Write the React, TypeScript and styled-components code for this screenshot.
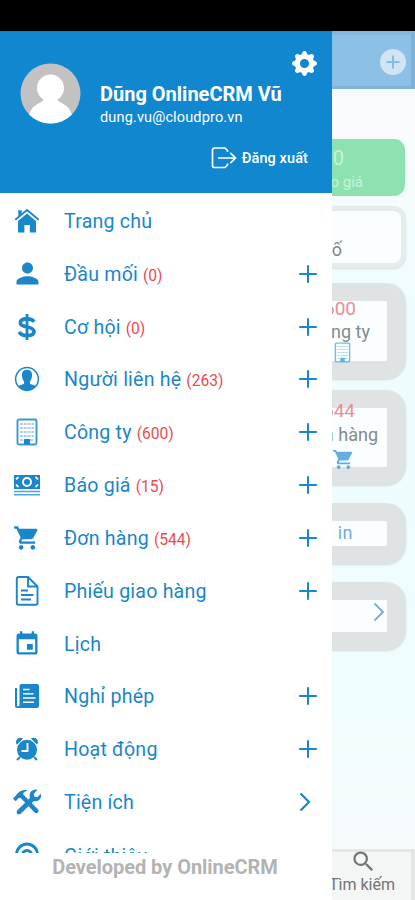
import React from 'react';
import styled, { createGlobalStyle } from 'styled-components';
import { MdPerson, MdShoppingCart, MdEvent, MdSearch } from 'react-icons/md';
import { BsGearFill } from 'react-icons/bs';

const BLUE = '#1b86c9';

const Global = createGlobalStyle`
  * { box-sizing: border-box; }
  body { margin: 0; background: #fff; font-family: Roboto, "Noto Sans", sans-serif; }
  svg { display: block; flex: none; }
`;

const Screen = styled.div`
  width: 415px;
  height: 900px;
  display: grid;
  grid-template-rows: 31px 869px;
  overflow: hidden;
`;
const StatusBar = styled.div`background: #000;`;
const Body = styled.div`
  display: grid;
  grid-template-columns: 332px 83px;
  min-height: 0;
`;

const Drawer = styled.aside`
  background: #fff;
  display: grid;
  grid-template-rows: 162px 660px 47px;
  min-height: 0;
`;
const Header = styled.header`
  background: #1187d0;
  border-top: 1px solid #2478ad;
  color: #fff;
  display: grid;
  grid-template-columns: 100px 1fr;
`;
const Avatar = styled.div`padding: 31px 0 0 20px;`;
const Account = styled.div`
  display: flex;
  flex-direction: column;
  align-items: flex-start;
`;
const Settings = styled.div`
  align-self: flex-end;
  padding-right: 15px;
  height: 45px;
  padding-top: 19px;
  font-size: 25px;
`;
const Name = styled.div`
  margin-top: 5px;
  font-size: 20px;
  line-height: 24px;
  font-weight: 700;
  white-space: nowrap;
`;
const Email = styled.div`
  font-size: 14.5px;
  line-height: 22px;
  letter-spacing: 0.15px;
  margin-top: 1px;
`;
const Logout = styled.div`
  align-self: flex-end;
  display: flex;
  align-items: center;
  gap: 5px;
  margin-top: 16px;
  padding-right: 24px;
  height: 26px;
  font-size: 14.5px;
  letter-spacing: 0.1px;
  font-weight: 500;
  white-space: nowrap;
`;

const Menu = styled.nav`
  padding-top: 1.4px;
  overflow: hidden;
  color: ${BLUE};
`;
const Row = styled.div`
  height: 52.85px;
  display: grid;
  grid-template-columns: 28px 1fr 30px;
  column-gap: 23px;
  padding: 0 9px 0 13px;
  align-items: center;

  &:last-child { padding-top: 3px; }
`;
const IconBox = styled.div<{ $shift?: number }>`
  display: flex;
  justify-content: center;
  align-items: center;
  padding-right: ${p => p.$shift ?? 0}px;
`;
const Label = styled.div`
  padding-top: 1px;
  font-size: 19.6px;
  letter-spacing: 0.2px;
  white-space: nowrap;
`;
const Count = styled.span`
  color: #ea4b50;
  font-size: 15.6px;
  letter-spacing: 0;
  margin-left: 5px;
`;
const Footer = styled.footer`
  display: flex;
  justify-content: center;
  padding: 2px 2px 0 0;
  font-size: 20px;
  line-height: 24px;
  font-weight: 700;
  letter-spacing: -0.05px;
  color: #b3b3b3;
  white-space: nowrap;
`;

const Page = styled.main`
  display: grid;
  grid-template-columns: minmax(0, 1fr);
  grid-template-rows: 58px 760px 51px;
  min-height: 0;
  min-width: 0;
  background: linear-gradient(180deg, #f8fbfe 10%, #effcfd 32%, #f0fdfd 78%, #f6fafd 94%);
  overflow: hidden;
`;
const TopBar = styled.div`
  background: #8cc0e5;
  border-top: 4px solid #83b9df;
  border-right: 4px solid #7fb1d7;
  border-bottom: 3px solid #80b3da;
  display: flex;
  justify-content: flex-end;
  align-items: center;
  padding: 2px 4px 0 0;
`;
const Cards = styled.div`
  display: flex;
  flex-direction: column;
  padding: 50px 9px 0 0;
  min-width: 0;
`;
const Quote = styled.div`
  height: 57px;
  margin-right: 1px;
  border-radius: 0 11px 11px 0;
  background: #8de2b2;
  color: #c8f2da;
  display: flex;
  flex-direction: column;
  overflow: hidden;
`;
const Card = styled.div<{ $h: number; $gap: number; $edge?: number }>`
  height: ${p => p.$h}px;
  margin-top: ${p => p.$gap}px;
  border: ${p => p.$edge ?? 18}px solid ${p => (p.$edge ? '#e6ebec' : '#dfe3e4')};
  border-right-width: ${p => (p.$edge ? 5 : 19)}px;
  border-left: 0;
  border-radius: 0 ${p => (p.$edge ? '13px 13px' : '20px 20px')} 0;
  background: #fafefe;
  box-shadow: 0 1px 2px #d4dadc;
  display: flex;
  flex-direction: column;
  clip-path: inset(-4px -4px -4px 0);
`;
const Line = styled.div<{ $right: number; $size: number; $color?: string; $h: number; $track?: number }>`
  display: flex;
  justify-content: flex-end;
  align-items: center;
  flex: none;
  height: ${p => p.$h}px;
  padding-right: ${p => p.$right}px;
  font-size: ${p => p.$size}px;
  letter-spacing: ${p => p.$track ?? 0}px;
  color: ${p => p.$color ?? 'inherit'};
  white-space: nowrap;
`;
const Thin = styled.div`color: #74abd7; display: flex; flex-direction: column;`;
const Tab = styled.div`
  background: #f4f5f5;
  border-top: 3px solid #e4e7e8;
  border-right: 4px solid #e3e5e6;
  color: #737474;
  display: flex;
  flex-direction: column;
`;

const Stroke = ({ size = 28, width = 2, children }: { size?: number; width?: number; children: React.ReactNode }) => (
  <svg width={size} height={size} viewBox="0 0 28 28" fill="none" stroke="currentColor" strokeWidth={width}>{children}</svg>
);
const Plus = () => <Stroke width={2}><path d="M14 5.200v17.600M5.200 14h17.600" /></Stroke>;
const Chevron = ({ width = 2.2 }: { width?: number }) => (
  <svg width="12" height="20" viewBox="0 0 12 20" fill="none" stroke="currentColor" strokeWidth={width}><path d="m1.500 1.500 8.500 8.500-8.500 8.500" /></svg>
);
const Home = () => (
  <svg width="28" height="28" viewBox="0 0 28 28" fill="currentColor">
    <path d="M5 14 14 6.500 23 14v11.500h-6.200V18h-5.400v7.500H5z" />
    <path d="M5.300 3.200h3.400v3.300L5.300 9.400z" />
    <path d="M2.300 12.700 14 3l11.700 9.700" fill="none" stroke="currentColor" strokeWidth="1.800" />
  </svg>
);
const Dollar = () => (
  <Stroke width={3.7}><path d="M21 8.800C19.900 6.700 17.500 5.800 14 5.800c-4.200 0-6.700 1.500-6.700 4s2.200 3.300 6.700 4.200c4.800 1 7 2 7 4.500 0 2.700-2.800 4.100-7 4.100-4.100 0-6.500-1.100-7.700-3.700" /><path d="M14 1v26" strokeWidth="2.800" /></Stroke>
);
const Contact = () => (
  <svg width="28" height="28" viewBox="0 0 28 28">
    <circle cx="14" cy="14" r="11.400" fill="none" stroke="currentColor" strokeWidth="1.500" />
    <path fill="currentColor" d="M14 4.800c3.800 0 5.500 2.700 5 6.200-.3 3-1.100 4.300-2.100 5.400v2.200c1 1.100 3.800 1.200 5.800 2.400C20.600 24 17.800 25.400 14 25.400S7.400 24 5.300 21c2-1.200 4.800-1.300 5.800-2.400v-2.200C10.100 15.300 9.300 14 9 11c-.5-3.500 1.200-6.200 5-6.200z" />
  </svg>
);
const Building = ({ w = 28 }: { w?: number }) => (
  <svg width={w} height={w} viewBox="0 0 28 28" fill="none" stroke="currentColor">
    <rect x="4.500" y="1.500" width="19" height="25" rx="1.500" strokeWidth="1.900" opacity=".85" />
    <path d="M7 6h14M7 10h14M7 14h14M7 18h14M7 22h4M17 22h4" strokeWidth="1.300" strokeDasharray="2.900 .9" opacity=".5" />
    <path d="M11.500 26v-4.500h5V26z" fill="currentColor" />
  </svg>
);
const Money = () => (
  <svg width="28" height="28" viewBox="0 0 28 28">
    <path fill="currentColor" d="M1 4h26v14H1z" />
    <circle cx="14" cy="11" r="4" fill="none" stroke="#fff" strokeWidth="1.900" />
    <path d="M3 8.300 5.500 6M22.500 6 25 8.300M3 13.700 5.500 16M22.500 16l2.500-2.300" stroke="#fff" strokeWidth="1.700" />
    <path d="M1 20.500h26M1 23.700h26" stroke="currentColor" strokeWidth="1.500" opacity=".75" />
  </svg>
);
const Doc = () => (
  <svg width="26" height="32" viewBox="0 0 26 32" fill="none" stroke="currentColor" strokeWidth="1.900">
    <path d="M4.500 2H14l9.500 9.500V28a1.700 1.700 0 0 1-1.700 1.700H4.500A1.700 1.700 0 0 1 2.800 28V3.700A1.700 1.700 0 0 1 4.500 2zM14 2v9.500h9.500" />
    <path d="M7 15.500h7M7 20h12.500M7 24.500h10" />
  </svg>
);
const News = () => (
  <svg width="28" height="28" viewBox="0 0 28 28">
    <path fill="currentColor" d="M8.500 2H24a2 2 0 0 1 2 2v20a2 2 0 0 1-2 2H4.500A2.500 2.500 0 0 1 2 23.500V6h2v17.200c0 1.400 2.500 1.400 2.500 0V4a2 2 0 0 1 2-2z" />
    <path d="M10 7.500h6.500M10 11.700h10.500M10 16h12.500M10 20.200h11" stroke="#fff" strokeWidth="1.500" />
  </svg>
);
const Alarm = () => (
  <svg width="28" height="28" viewBox="0 0 28 28" fill="none">
    <circle cx="14" cy="14.700" r="10" fill="currentColor" />
    <path d="m7 22-3 3M21 22l3 3" stroke="currentColor" strokeWidth="2" />
    <path fill="currentColor" d="M3.800 9.800C1.200 5.300 5.700.8 10.100 3.600zM24.200 9.800c2.600-4.500-1.900-9-6.300-6.200z" />
    <path d="M14.500 8v8h-6" stroke="#fff" strokeWidth="1.900" />
  </svg>
);
const Tools = () => (
  <svg width="30" height="28" viewBox="0 0 30 28">
    <path fill="currentColor" d="M1 10.700 6 5c2.500-2.500 6-3.500 9.500-2.600-2.600.8-4.200 2-4.500 3.700l2 2.100 12.800 13c1 1 1 2.400.1 3.300s-2.300.9-3.300-.1L9.800 11.300 8 9.700c-1.300.1-2.200.8-2.700 1.900l-1.500 1.600z" />
    <path fill="currentColor" d="M20.900 2.200c2-.9 3.500-.6 4.400-.2l-3.600 3.700.6 2.900 3 .6 3.400-3.500c1.500 4.500-2 8.500-6.800 7.200L9 25.400c-1.300 1.300-2.800 1.200-3.700.3-1-1-.9-2.500.3-3.600L18 9.900c-1.100-3.300 0-6.500 2.900-7.700z" />
  </svg>
);
const About = () => (
  <Stroke width={3}><circle cx="14" cy="12.500" r="10.500" /><circle cx="14" cy="13" r="4.500" /><path d="m6 26 5-9M22 26l-5-9" /></Stroke>
);
const Exit = () => (
  <svg width="26" height="24" viewBox="0 0 26 24" fill="none" stroke="currentColor" strokeWidth="1.700">
    <path d="M16.500 6V4.500L14 2H3.500A2 2 0 0 0 1.500 4v15.500a2 2 0 0 0 2 2H14l2.500-2.500v-1.500M7 12h17M19.300 6.900l5.200 5.100-5.200 5.100" />
  </svg>
);
const AddCircle = () => (
  <svg width="28" height="28" viewBox="0 0 28 28">
    <circle cx="14" cy="14" r="13" fill="#d0e4f4" />
    <path d="M14 7.500v13M7.500 14h13" stroke="#84b9e2" strokeWidth="2" />
  </svg>
);

type Item = { label: string; icon: React.ReactNode; count?: number; end?: 'plus' | 'arrow' };
const items: Item[] = [
  { label: 'Trang chủ', icon: <Home /> },
  { label: 'Đầu mối', icon: <MdPerson size={33} />, count: 0, end: 'plus' },
  { label: 'Cơ hội', icon: <Dollar />, count: 0, end: 'plus' },
  { label: 'Người liên hệ', icon: <Contact />, count: 263, end: 'plus' },
  { label: 'Công ty', icon: <Building />, count: 600, end: 'plus' },
  { label: 'Báo giá', icon: <Money />, count: 15, end: 'plus' },
  { label: 'Đơn hàng', icon: <MdShoppingCart size={28} />, count: 544, end: 'plus' },
  { label: 'Phiếu giao hàng', icon: <Doc />, end: 'plus' },
  { label: 'Lịch', icon: <MdEvent size={28} /> },
  { label: 'Nghỉ phép', icon: <News />, end: 'plus' },
  { label: 'Hoạt động', icon: <Alarm />, end: 'plus' },
  { label: 'Tiện ích', icon: <Tools />, end: 'arrow' },
  { label: 'Giới thiệu', icon: <About /> },
];

export default function App() {
  return (
    <>
      <Global />
      <Screen>
        <StatusBar />
        <Body>
          <Drawer>
            <Header>
              <Avatar>
                <svg width="61" height="61" viewBox="0 0 61 61">
                  <defs><clipPath id="face"><circle cx="30.500" cy="30.500" r="30" /></clipPath></defs>
                  <g clipPath="url(#face)">
                    <path fill="#c2c2c2" d="M0 0h61v61H0z" />
                    <circle cx="30.500" cy="25" r="13.500" fill="#fff" />
                    <path fill="#fff" d="M24 34h13c0 5 4 5 8 8 4 2.500 6 6 7 11v8H9v-8c1-5 3-8.500 7-11 4-3 8-3 8-8z" />
                  </g>
                </svg>
              </Avatar>
              <Account>
                <Settings><BsGearFill /></Settings>
                <Name>Dũng OnlineCRM Vũ</Name>
                <Email>dung.vu@cloudpro.vn</Email>
                <Logout><Exit />Đăng xuất</Logout>
              </Account>
            </Header>
            <Menu>
              {items.map(item => (
                <Row key={item.label}>
                  <IconBox>{item.icon}</IconBox>
                  <Label>
                    {item.label}
                    {item.count !== undefined && <Count>({item.count})</Count>}
                  </Label>
                  <IconBox $shift={item.end === 'arrow' ? 6 : 0}>
                    {item.end === 'plus' && <Plus />}
                    {item.end === 'arrow' && <Chevron />}
                  </IconBox>
                </Row>
              ))}
            </Menu>
            <Footer>Developed by OnlineCRM</Footer>
          </Drawer>
          <Page>
            <TopBar><AddCircle /></TopBar>
            <Cards>
              <Quote>
                <Line $right={61} $size={20} $h={38}>70</Line>
                <Line $right={42} $size={15} $h={10}>Báo giá</Line>
              </Quote>
              <Card $h={62} $gap={10} $edge={5}>
                <Line $right={59} $size={18} $h={76} $color="#818686">Doanh số</Line>
              </Card>
              <Card $h={96} $gap={15}>
                <Line $right={31} $size={19} $h={15} $color="#e68d98">600</Line>
                <Line $right={17} $size={18} $h={31} $color="#848b8e">Công ty</Line>
                <Line $right={34} $size={18} $h={10} $color="#62afe0"><Building w={21} /></Line>
              </Card>
              <Card $h={95} $gap={11}>
                <Line $right={32} $size={19} $h={4} $color="#e68d98">544</Line>
                <Line $right={9} $size={18} $h={45} $color="#848b8e">Đơn hàng</Line>
                <Line $right={32} $size={18} $h={4} $color="#62afe0"><MdShoppingCart size={23} /></Line>
              </Card>
              <Card $h={61} $gap={18}>
                <Thin><Line $right={34} $size={18} $h={22} $track={0.5}>Check in</Line></Thin>
              </Card>
              <Card $h={68} $gap={18}>
                <Thin><Line $right={2} $size={18} $h={24}><Chevron width={1.8} /></Line></Thin>
              </Card>
            </Cards>
            <Tab>
              <Line $right={34} $size={18} $h={19}><MdSearch size={27} /></Line>
              <Line $right={16} $size={16} $h={26}>Tìm kiếm</Line>
            </Tab>
          </Page>
        </Body>
      </Screen>
    </>
  );
}
